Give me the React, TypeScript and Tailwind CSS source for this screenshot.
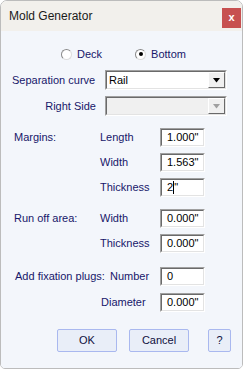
import type { ReactNode } from 'react';

// Sunken 3D frame used by the edit boxes and combo boxes
function Sunken({ className, disabled, children }: { className: string; disabled?: boolean; children?: ReactNode }) {
  return (
    <div className={`${className} border-t border-l border-t-[#a0a0a0] border-l-[#a0a0a0] border-b border-r border-b-white border-r-white`}>
      <div
        className={`h-full w-full border-t border-l border-t-[#6a6a6a] border-l-[#6a6a6a] border-b border-r border-b-[#e3e3e3] border-r-[#e3e3e3] flex items-center ${
          disabled ? 'bg-[#f0f0f0]' : 'bg-white'
        }`}
      >
        {children}
      </div>
    </div>
  );
}

function Combo({ value, disabled }: { value?: string; disabled?: boolean }) {
  return (
    <Sunken className="w-[122px] h-[20px]" disabled={disabled}>
      <span className="flex-1 pl-[2px] text-black">{value}</span>
      <div className="w-[17px] h-[16px] mr-[0px] bg-[#f0f0f0] border-t border-l border-t-white border-l-white border-b border-r border-b-[#696969] border-r-[#696969] flex items-center justify-center">
        <svg width="9" height="5" viewBox="0 0 9 5">
          <path d="M1 0h7L4.5 4.5z" fill={disabled ? '#a0a0a0' : '#000'} />
        </svg>
      </div>
    </Sunken>
  );
}

function Field({ children }: { children: ReactNode }) {
  return (
    <Sunken className="w-[45px] h-[19px]">
      <span className="pl-[5px] text-black flex items-center">{children}</span>
    </Sunken>
  );
}

function Radio({ checked, label }: { checked?: boolean; label: string }) {
  return (
    <div className="flex items-center">
      <div className="w-[11px] h-[11px] rounded-full border border-t-[#8a8a8a] border-l-[#8a8a8a] border-b-[#dcdcdc] border-r-[#dcdcdc] bg-white flex items-center justify-center">
        {checked && <div className="w-[4px] h-[4px] rounded-full bg-black" />}
      </div>
      <span className="ml-[5px]">{label}</span>
    </div>
  );
}

function Btn({ label, w }: { label: string; w: string }) {
  return (
    <div className={`${w} h-[23px] rounded-[2px] border border-[#a9b8ef] bg-[#e9eef8] flex items-center justify-center text-[#101040]`}>
      {label}
    </div>
  );
}

export default function App() {
  return (
    <div className="w-[244px] h-[370px] bg-white" style={{ fontFamily: '"Liberation Sans", Arial, sans-serif' }}>
      <div className="w-[243px] h-[369px] border border-[#bcbcbc] rounded-t-[7px] rounded-b-[5px] overflow-hidden flex flex-col">
        {/* Title bar */}
        <div className="h-[30px] bg-[#f2f0ec] flex items-center justify-between pl-[8px] pr-[1px]">
          <span className="text-[12px] text-[#1a1a1a]">Mold Generator</span>
          <div className="w-[19px] h-[20px] mt-[4px] bg-[#c75050] flex items-center justify-center text-white text-[11px] font-bold leading-none pb-[2px]">
            x
          </div>
        </div>

        {/* Body */}
        <div className="flex-1 bg-[#f3f6fb] text-[11px] text-[#17176a] leading-none">
          <div className="h-[14px] mt-[16px] flex items-center pl-[60px] gap-[33px]">
            <Radio label="Deck" />
            <Radio checked label="Bottom" />
          </div>

          <div className="flex items-center mt-[9px]">
            <span className="w-[104px] pl-[11px]">Separation curve</span>
            <Combo value="Rail" />
          </div>
          <div className="flex items-center mt-[6px]">
            <span className="w-[104px] pr-[9px] text-right">Right Side</span>
            <Combo disabled />
          </div>

          <div className="flex items-center mt-[12px]">
            <span className="w-[99px] pl-[13px]">Margins:</span>
            <span className="w-[60px]">Length</span>
            <Field>1.000"</Field>
          </div>
          <div className="flex items-center mt-[6px]">
            <span className="w-[99px]" />
            <span className="w-[60px]">Width</span>
            <Field>1.563"</Field>
          </div>
          <div className="flex items-center mt-[6px]">
            <span className="w-[99px]" />
            <span className="w-[60px]">Thickness</span>
            <Field>
              2<span className="inline-block w-[1px] h-[13px] bg-black" />"
            </Field>
          </div>

          <div className="flex items-center mt-[12px]">
            <span className="w-[99px] pl-[13px]">Run off area:</span>
            <span className="w-[60px]">Width</span>
            <Field>0.000"</Field>
          </div>
          <div className="flex items-center mt-[6px]">
            <span className="w-[99px]" />
            <span className="w-[60px]">Thickness</span>
            <Field>0.000"</Field>
          </div>

          <div className="flex items-center mt-[14px]">
            <span className="w-[109px] pl-[14px]">Add fixation plugs:</span>
            <span className="w-[50px]">Number</span>
            <Field>0</Field>
          </div>
          <div className="flex items-center mt-[7px]">
            <span className="w-[100px]" />
            <span className="w-[59px]">Diameter</span>
            <Field>0.000"</Field>
          </div>

          <div className="flex items-center mt-[17px] pl-[56px]">
            <Btn label="OK" w="w-[60px]" />
            <div className="w-[12px]" />
            <Btn label="Cancel" w="w-[60px]" />
            <div className="w-[19px]" />
            <Btn label="?" w="w-[23px]" />
          </div>
        </div>
      </div>
    </div>
  );
}
